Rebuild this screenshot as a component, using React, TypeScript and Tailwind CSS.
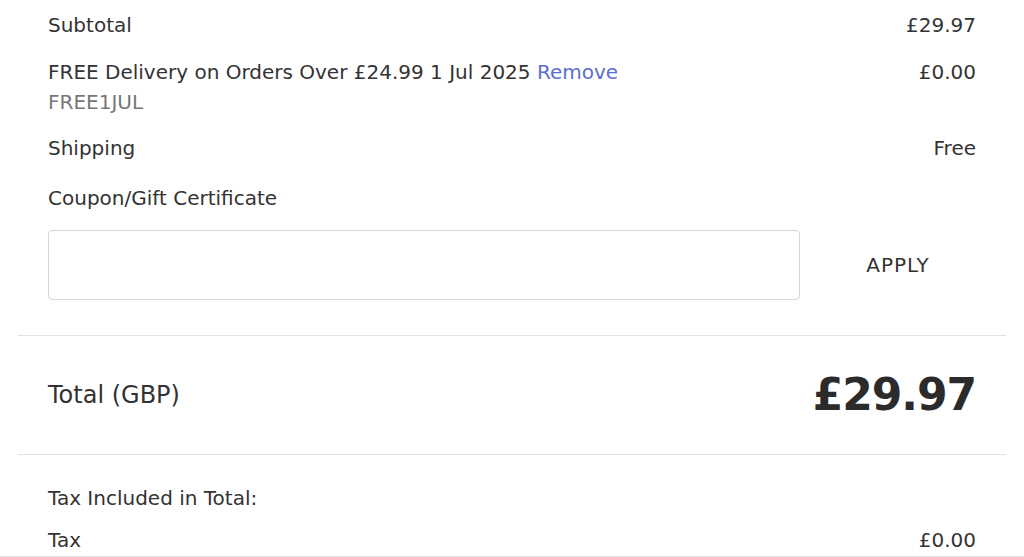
import React from 'react'

const font = "font-['DejaVu_Sans','Open_Sans',sans-serif]"

function Row({ label, value }: { label: React.ReactNode; value: React.ReactNode }) {
  return (
    <div className="flex items-start justify-between">
      <div>{label}</div>
      <div>{value}</div>
    </div>
  )
}

export default function App() {
  return (
    <div className={`${font} min-h-[557px] w-[1024px] overflow-hidden bg-white text-[20px] leading-[30px] text-[#333]`}>
      <div className="mx-[18px]">
        {/* line items */}
        <div className="px-[30px] pt-[10px]">
          <Row label="Subtotal" value="£29.97" />
          <div className="mt-[17px] flex items-start justify-between">
            <div>
              <div>
                FREE Delivery on Orders Over £24.99 1 Jul 2025{' '}
                <a className="text-[#5a6fd0]">Remove</a>
              </div>
              <div className="text-[#777]">FREE1JUL</div>
            </div>
            <div>£0.00</div>
          </div>
          <div className="mt-[16px]">
            <Row label="Shipping" value="Free" />
          </div>
          <div className="mt-[20px]">Coupon/Gift Certificate</div>
          <div className="mt-[17px] flex items-center gap-[20px]">
            <input
              type="text"
              className="h-[70px] w-[752px] rounded-[4px] border border-[#d4d4d4] bg-white px-3 outline-none"
            />
            <button type="button" className="flex-1 text-center uppercase tracking-[1px] text-[#333]">
              Apply
            </button>
          </div>
        </div>

        <div className="mt-[35px] border-t border-[#e2e2e2]" />

        {/* total */}
        <div className="flex h-[118px] items-center justify-between px-[30px]">
          <span className="text-[24px]">Total (GBP)</span>
          <span className="text-[44px] font-bold tracking-tight text-[#2b2b2b]">£29.97</span>
        </div>

        <div className="border-t border-[#e2e2e2]" />

        {/* tax */}
        <div className="px-[30px] pt-[28px]">
          <div>Tax Included in Total:</div>
          <div className="mt-[12px]">
            <Row label="Tax" value="£0.00" />
          </div>
        </div>
      </div>
      <div className="mt-[1px] border-t border-[#e2e2e2]" />
    </div>
  )
}
